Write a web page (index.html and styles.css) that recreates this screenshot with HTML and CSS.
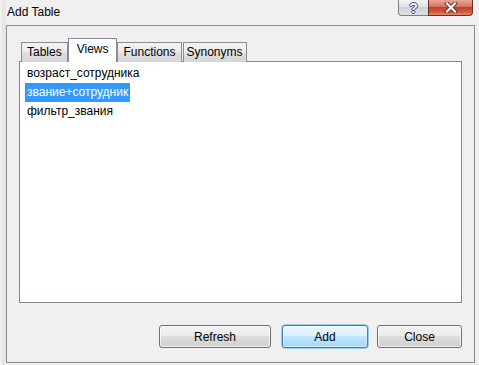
FILE: index.html
```html
<!DOCTYPE html>

<head>
    <meta charset="utf-8">
    <title>Add Table</title>
    <link rel="stylesheet" href="styles.css">
</head>

<body>
    <div class="window">
        <div class="titlebar">
            <span class="titlebar__title">Add Table</span>
            <div class="titlebar__controls">
                <button class="titlebar__help">?</button>
                <button class="titlebar__close">
                    <svg width="18" height="11" viewBox="0 0 18 11">
                        <path d="M5 1.5 L13 9.5 M13 1.5 L5 9.5" stroke="#5a2a20" stroke-width="4" stroke-linecap="square" fill="none"/>
                        <path d="M5 1.5 L13 9.5 M13 1.5 L5 9.5" stroke="#ffffff" stroke-width="2.2" stroke-linecap="square" fill="none"/>
                    </svg>
                </button>
            </div>
        </div>
        <div class="dialog">
            <div class="tabs">
                <div class="tabs__tab">Tables</div>
                <div class="tabs__tab tabs__tab--active">Views</div>
                <div class="tabs__tab">Functions</div>
                <div class="tabs__tab tabs__tab--last">Synonyms</div>
            </div>
            <ul class="list">
                <li class="list__item">возраст_сотрудника</li>
                <li class="list__item list__item--selected">звание+сотрудник</li>
                <li class="list__item">фильтр_звания</li>
            </ul>
            <div class="actions">
                <button class="btn btn--wide">Refresh</button>
                <button class="btn btn--default">Add</button>
                <button class="btn btn--close">Close</button>
            </div>
        </div>
    </div>
</body>

</html>
```

FILE: styles.css
```css
body {
    margin: 0;
    width: 479px;
    height: 365px;
    overflow: hidden;
    background: linear-gradient(to right, #f0f0f0 2px, #e4e4e4 2px, #e8e8e8 6px, #f0f0f0 6px);
}

.window,
.btn,
.titlebar__help {
    font: 400 12px 'Liberation Sans', Arial, sans-serif;
    color: #000000;
}

.titlebar {
    height: 25px;
    display: flex;
    justify-content: space-between;
    align-items: flex-start;
    padding: 0 6px 0 7px;
}

.titlebar__title {
    padding-top: 4px;
    line-height: 16px;
}

.titlebar__controls {
    display: flex;
}

.titlebar__help,
.titlebar__close {
    height: 16px;
    padding: 0;
    display: flex;
    align-items: center;
    justify-content: center;
    border: 1px solid #7b8088;
    border-top: none;
}

.titlebar__help {
    width: 30px;
    border-radius: 0 0 0 4px;
    border-right: none;
    background: linear-gradient(#f2f3f5, #dfe2e6 50%, #cfd3d9 50%, #dde0e4);
    color: #f4f4f4;
    font-weight: 700;
    font-size: 14px;
    line-height: 14px;
    text-shadow: 1px 0 0 #4a4f58, -1px 0 0 #4a4f58, 0 1px 0 #4a4f58, 0 -1px 0 #4a4f58;
}

.titlebar__close {
    width: 45px;
    border-radius: 0 0 4px 0;
    border-color: #6b2e23;
    background: linear-gradient(#e8a898, #d47361 45%, #c2402a 50%, #d25a3f 80%, #e28a72);
}

.dialog {
    margin-left: 6px;
    width: 443px;
    height: 336px;
    padding: 0 12px;
    border: 1px solid #8c8c8c;
    display: flex;
    flex-direction: column;
}

.tabs {
    display: flex;
    align-items: flex-end;
    margin-top: 13px;
    padding-left: 2px;
    height: 23px;
    position: relative;
    z-index: 1;
    margin-bottom: -1px;
}

.tabs__tab {
    height: 20px;
    padding: 0 5px;
    box-sizing: border-box;
    border: 1px solid #898c95;
    border-bottom: none;
    line-height: 19px;
    background: linear-gradient(#f3f3f3, #ebebeb 45%, #dddddd 55%, #d6d6d6);
}

.tabs__tab--active {
    height: 24px;
    padding: 0 8px;
    line-height: 20px;
    background: #ffffff;
}

.tabs__tab--last {
    margin-left: 1px;
    padding: 0 3px;
}

.list {
    list-style: none;
    margin: 0;
    height: 238px;
    padding: 2px 5px 0;
    border: 1px solid #828790;
    background: #ffffff;
}

.list__item {
    width: fit-content;
    height: 19px;
    line-height: 18px;
    padding: 0 2px;
}

.list__item--selected {
    background: #3399ff;
    color: #ffffff;
}

.actions {
    display: flex;
    justify-content: flex-end;
    margin-top: 22px;
}

.btn {
    width: 86px;
    height: 23px;
    padding: 0;
    border: 1px solid #707070;
    border-radius: 3px;
    background: linear-gradient(#f2f2f2, #ebebeb 50%, #dddddd 50%, #cfcfcf);
    box-shadow: inset 0 0 0 1px rgba(255, 255, 255, 0.7);
}

.btn--wide {
    width: 112px;
}

.btn--default {
    margin-left: 11px;
    border-color: #3c7fb1;
    background: linear-gradient(#eaf6fd, #d9f0fc 50%, #bee6fd 50%, #a7d9f5);
    box-shadow: inset 0 0 0 1px rgba(255, 255, 255, 0.5), 0 0 0 0.5px #48a6da;
}

.btn--close {
    width: 85px;
    margin-left: 9px;
}
```
